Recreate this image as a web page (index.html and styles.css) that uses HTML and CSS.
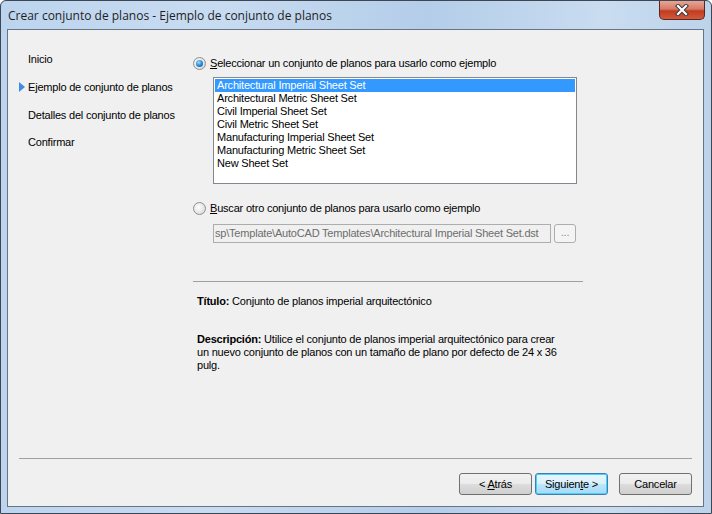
FILE: index.html
```html
<!DOCTYPE html>
<html lang="es">
<head>
  <meta charset="UTF-8">
  <title>Crear conjunto de planos - Ejemplo de conjunto de planos</title>
  <link rel="stylesheet" href="styles.css">
</head>
<body>
  <div class="window">
    <div class="titlebar">
      <span class="title">Crear conjunto de planos - Ejemplo de conjunto de planos</span>
      <div class="close-btn">
        <svg width="18" height="12" viewBox="0 0 18 12">
          <path d="M5 2 L13 10 M13 2 L5 10" stroke="#3b3b3b" stroke-width="4.2" stroke-linecap="square"/>
          <path d="M5 2 L13 10 M13 2 L5 10" stroke="#ffffff" stroke-width="2.2" stroke-linecap="square"/>
        </svg>
      </div>
    </div>

    <div class="client">
      <div class="content">
        <ul class="steps">
          <li>Inicio</li>
          <li class="current">Ejemplo de conjunto de planos</li>
          <li>Detalles del conjunto de planos</li>
          <li>Confirmar</li>
        </ul>

        <div class="main">
          <label class="radio-row">
            <span class="radio checked"></span>
            <span><u>S</u>eleccionar un conjunto de planos para usarlo como ejemplo</span>
          </label>
          <ul class="listbox">
            <li class="selected">Architectural Imperial Sheet Set</li>
            <li>Architectural Metric Sheet Set</li>
            <li>Civil Imperial Sheet Set</li>
            <li>Civil Metric Sheet Set</li>
            <li>Manufacturing Imperial Sheet Set</li>
            <li>Manufacturing Metric Sheet Set</li>
            <li>New Sheet Set</li>
          </ul>

          <label class="radio-row second">
            <span class="radio"></span>
            <span><u>B</u>uscar otro conjunto de planos para usarlo como ejemplo</span>
          </label>
          <div class="browse-row">
            <div class="path-input">sp\Template\AutoCAD Templates\Architectural Imperial Sheet Set.dst</div>
            <div class="browse-btn">...</div>
          </div>

          <div class="separator"></div>

          <div class="info">
            <p class="info-title"><b>Título:</b> Conjunto de planos imperial arquitectónico</p>
            <p class="info-desc"><b>Descripción:</b> Utilice el conjunto de planos imperial arquitectónico para crear<br>un nuevo conjunto de planos con un tamaño de plano por defecto de 24 x 36<br>pulg.</p>
          </div>
        </div>
      </div>

      <div class="footer">
        <div class="footer-line"></div>
        <div class="buttons">
          <button class="btn">&lt; <u>A</u>trás</button>
          <button class="btn default">Siguien<u>t</u>e &gt;</button>
          <button class="btn cancel">Cancelar</button>
        </div>
      </div>
    </div>
  </div>
</body>
</html>
```

FILE: styles.css
```css
body {
  margin: 0;
  padding: 0;
  background: #ffffff;
  font-family: "Liberation Sans", Arial, sans-serif;
  font-size: 11px;
  letter-spacing: -0.2px;
  color: #000;
}

.window {
  width: 712px;
  height: 514px;
  box-sizing: border-box;
  border: 1px solid #3c4654;
  border-radius: 6px 6px 0 0;
  background: linear-gradient(90deg, #bcd4ee 0%, #c8dcf1 30%, #b4cde9 60%, #c9dcf0 85%, #bdd3ea 100%);
  padding: 0 7px 6px 6px;
  display: flex;
  flex-direction: column;
}

.titlebar {
  height: 28px;
  display: flex;
  align-items: flex-start;
  justify-content: space-between;
}

.title {
  font-family: "Open Sans", "Noto Sans", sans-serif;
  font-size: 12px;
  letter-spacing: 0;
  color: #1e1e1e;
  padding: 6px 0 0 1px;
}

.close-btn {
  width: 44px;
  height: 18px;
  margin-right: -1px;
  border: 1px solid #5a2620;
  border-top: none;
  border-radius: 0 0 5px 5px;
  background: linear-gradient(180deg, #e8a695 0%, #d47a65 45%, #c23b1f 55%, #d2593c 100%);
  display: flex;
  align-items: center;
  justify-content: center;
}

.client {
  flex: 1;
  background: #f0f0f0;
  border: 1px solid #667485;
  display: flex;
  flex-direction: column;
}

.content {
  flex: 1;
  display: flex;
}

.steps {
  list-style: none;
  margin: 0;
  padding: 22px 0 0 20px;
  width: 165px;
}

.steps li {
  height: 28px;
  line-height: 14px;
  position: relative;
}

.steps li:last-child {
  margin-top: -1px;
}

.steps li.current::before {
  content: "";
  position: absolute;
  left: -9px;
  top: 2px;
  border-left: 6px solid #3a8ee6;
  border-top: 5px solid transparent;
  border-bottom: 5px solid transparent;
}

.main {
  padding: 26px 0 0 0;
  width: 390px;
}

.radio-row {
  display: flex;
  align-items: center;
  gap: 4px;
  height: 14px;
}

.radio {
  width: 11px;
  height: 11px;
  border-radius: 50%;
  border: 1px solid #8f8f8f;
  background: radial-gradient(circle at 40% 40%, #ffffff 0%, #e4e4e4 60%, #cfcfcf 100%);
  position: relative;
  flex-shrink: 0;
}

.radio.checked::after {
  content: "";
  position: absolute;
  left: 2px;
  top: 2px;
  width: 7px;
  height: 7px;
  border-radius: 50%;
  background: radial-gradient(circle at 40% 35%, #9fe0ff 0%, #2a8ad4 50%, #0d4a86 100%);
}

.listbox {
  list-style: none;
  margin: 7px 0 0 20px;
  padding: 1px;
  width: 360px;
  height: 103px;
  background: #ffffff;
  border: 1px solid #828790;
}

.listbox li {
  height: 13px;
  line-height: 13px;
  padding-left: 2px;
}

.listbox li.selected {
  background: #3399ff;
  color: #ffffff;
}

.radio-row.second {
  margin-top: 17px;
}

.browse-row {
  display: flex;
  gap: 3px;
  margin: 9px 0 0 20px;
}

.path-input {
  width: 335px;
  height: 17px;
  line-height: 17px;
  padding-left: 1px;
  border: 1px solid #adadad;
  background: #f0f0f0;
  color: #6d6d6d;
  white-space: nowrap;
}

.browse-btn {
  width: 20px;
  height: 17px;
  line-height: 15px;
  text-align: center;
  border: 1px solid #adadad;
  border-radius: 3px;
  color: #8a8a8a;
  background: #f4f4f4;
}

.separator {
  height: 1px;
  background: #a0a0a0;
  margin-top: 38px;
}

.info {
  padding-left: 4px;
}

.info p {
  margin: 0;
  line-height: 13px;
}

.info-title {
  margin-top: 13px !important;
}

.info-desc {
  margin-top: 25px !important;
}

.footer {
  padding: 0 11px 11px 11px;
}

.footer-line {
  height: 1px;
  background: #a0a0a0;
}

.buttons {
  display: flex;
  justify-content: flex-end;
  padding-top: 14px;
}

.btn {
  width: 73px;
  height: 22px;
  font-family: "Liberation Sans", Arial, sans-serif;
  font-size: 11px;
  letter-spacing: -0.2px;
  color: #000;
  border: 1px solid #707070;
  border-radius: 3px;
  background: linear-gradient(180deg, #f2f2f2 0%, #ebebeb 50%, #dddddd 51%, #cfcfcf 100%);
  padding: 0;
}

.btn.default {
  margin-left: 3px;
  border-color: #3c7fb1;
  box-shadow: inset 0 0 0 1px #48d1fe;
  background: linear-gradient(180deg, #eaf6fd 0%, #d9f0fc 50%, #bee6fd 51%, #a7d9f5 100%);
}

.btn.cancel {
  margin-left: 11px;
}
```
